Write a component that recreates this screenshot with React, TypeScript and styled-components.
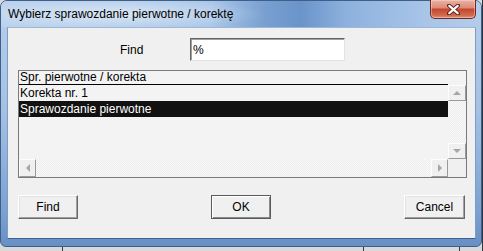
import React from "react";
import styled, { createGlobalStyle, css } from "styled-components";

const GlobalStyle = createGlobalStyle`
  html, body {
    margin: 0;
    padding: 0;
    overflow: hidden;
  }
  body {
    font-family: "Liberation Sans", Arial, sans-serif;
    font-size: 12px;
    color: #000;
  }
`;

// desktop behind the dialog (bits of other windows peek out at the bottom)
const Desktop = styled.div`
  width: 483px;
  height: 251px;
  background-color: #d9d9d9;
  background-image: linear-gradient(#3a3a3a, #3a3a3a), linear-gradient(#3a3a3a, #3a3a3a),
    linear-gradient(#3a3a3a, #3a3a3a), linear-gradient(#2e3440, #2e3440);
  background-size: 1px 100%, 1px 100%, 1px 100%, 1px 100%;
  background-position: 62px 0, 363px 0, 459px 0, 482px 0;
  background-repeat: no-repeat;
`;

const Window = styled.div`
  box-sizing: border-box;
  width: 482px;
  height: 247px;
  display: flex;
  flex-direction: column;
  border: 1px solid #3f5f88;
  border-radius: 7px 7px 6px 6px;
  background: linear-gradient(to bottom, #b6cfeb 0%, #a4c1e4 45%, #7ba2d2 85%, #6890c4 100%);
`;

const TitleBar = styled.div`
  height: 26px;
  display: flex;
  align-items: flex-start;
  border-radius: 6px 6px 0 0;
  background: radial-gradient(ellipse 150px 16px at 115px 13px, rgba(255, 255, 255, 0.5), rgba(255, 255, 255, 0)),
    linear-gradient(
      to right,
      #bcd3ed 0,
      #aac7e8 210px,
      #789fd0 265px,
      #6a94ca 300px,
      #8db1dd 345px,
      #a7c4e7 420px,
      #b3cceb 100%
    );
`;

const TitleText = styled.div`
  margin-left: 7px;
  line-height: 26px;
  font-size: 12px;
  color: #000;
  white-space: nowrap;
`;

const CloseButton = styled.div`
  box-sizing: border-box;
  margin: -1px 5px 0 auto;
  width: 46px;
  height: 19px;
  display: flex;
  align-items: center;
  justify-content: center;
  border: 1px solid #6b2b22;
  border-top: none;
  border-radius: 0 0 5px 5px;
  background: linear-gradient(to bottom, #eab2a4 0%, #dc8c78 42%, #c5472f 52%, #cf6a4e 85%, #e0937a 100%);
  box-shadow: inset 0 0 0 1px rgba(255, 220, 210, 0.45);
`;

const Frame = styled.div`
  flex: 1;
  display: flex;
  padding: 0 5px 7px 6px;
`;

const Client = styled.div`
  box-sizing: border-box;
  flex: 1;
  display: flex;
  flex-direction: column;
  padding: 10px 8px 0 10px;
  background: #f0f0f0;
  border: 1px solid #7f9dc4;
  border-top-color: #9fb6d4;
  border-bottom-color: #3f6090;
`;

const FindRow = styled.div`
  display: flex;
  align-items: center;
  height: 23px;
`;

const FieldLabel = styled.label`
  width: 70px;
  margin-left: 102px;
  font-size: 12px;
`;

const TextInput = styled.input`
  box-sizing: border-box;
  width: 155px;
  height: 23px;
  margin: 0;
  padding: 0 0 0 2px;
  font-family: "Liberation Sans", Arial, sans-serif;
  font-size: 12px;
  color: #000;
  background: #fff;
  border: 1px solid;
  border-color: #646464 #e3e3e3 #e3e3e3 #646464;
  box-shadow: inset 1px 1px 0 #a0a0a0;
  outline: none;
`;

const ListBox = styled.div`
  box-sizing: border-box;
  margin-top: 9px;
  width: 449px;
  height: 108px;
  display: grid;
  grid-template-columns: 429px 18px;
  grid-template-rows: 14px 74px 18px;
  border: 1px solid #7a7a7a;
  background: #f3f3f3;
`;

const ListHeader = styled.div`
  box-sizing: border-box;
  height: 14px;
  padding-left: 1px;
  line-height: 13px;
  overflow: hidden;
  border-bottom: 1px solid #000;
  white-space: nowrap;
`;

const HeaderSpacer = styled.div``;

const Rows = styled.div`
  overflow: hidden;
`;

const Row = styled.div<{ $selected?: boolean }>`
  height: 16px;
  line-height: 16px;
  padding-left: 1px;
  white-space: nowrap;
  ${(p) =>
    p.$selected &&
    css`
      background: #111;
      color: #fff;
    `}
`;

const ScrollBar = styled.div<{ $vertical?: boolean }>`
  display: flex;
  flex-direction: ${(p) => (p.$vertical ? "column" : "row")};
  background: repeating-conic-gradient(#fbfbfb 0 25%, #ebebeb 0 50%) 0 0 / 2px 2px;
`;

const ScrollButton = styled.div<{ $vertical?: boolean }>`
  box-sizing: border-box;
  flex: none;
  ${(p) => (p.$vertical ? "height: 16px;" : "width: 17px;")}
  display: flex;
  align-items: center;
  justify-content: center;
  background: #f0f0f0;
  border: 1px solid;
  border-color: #fdfdfd #9a9a9a #9a9a9a #fdfdfd;
`;

const Track = styled.div`
  flex: 1;
`;

const arrowShapes = {
  up: css`
    border-left: 4px solid transparent;
    border-right: 4px solid transparent;
    border-bottom: 4px solid #a6a6a6;
  `,
  down: css`
    border-left: 4px solid transparent;
    border-right: 4px solid transparent;
    border-top: 4px solid #a6a6a6;
  `,
  left: css`
    border-top: 4px solid transparent;
    border-bottom: 4px solid transparent;
    border-right: 4px solid #a6a6a6;
  `,
  right: css`
    border-top: 4px solid transparent;
    border-bottom: 4px solid transparent;
    border-left: 4px solid #a6a6a6;
  `,
};

const Arrow = styled.span<{ $dir: keyof typeof arrowShapes }>`
  width: 0;
  height: 0;
  ${(p) => arrowShapes[p.$dir]}
`;

const Corner = styled.div`
  background: #f0f0f0;
`;

const ButtonRow = styled.div`
  margin-top: 17px;
  padding-right: 2px;
  width: 447px;
  display: flex;
  justify-content: space-between;
`;

const PushButton = styled.button<{ $default?: boolean; $wide?: boolean }>`
  box-sizing: border-box;
  width: ${(p) => (p.$wide ? "61px" : "60px")};
  height: 24px;
  margin: 0;
  padding: 0;
  font-family: "Liberation Sans", Arial, sans-serif;
  font-size: 12px;
  color: #000;
  background: #f0f0f0;
  border: 1px solid;
  border-color: #ffffff #696969 #696969 #ffffff;
  box-shadow: inset -1px -1px 0 #a0a0a0, inset 1px 1px 0 #e3e3e3;
  ${(p) =>
    p.$default &&
    css`
      border-color: #5a5a5a;
      box-shadow: inset 1px 1px 0 #fff, inset -1px -1px 0 #8a8a8a;
    `}
`;

const CloseGlyph = () => (
  <svg width="13" height="11" viewBox="0 0 13 11">
    <path d="M2 1.5 L11 9.5 M11 1.5 L2 9.5" stroke="#5a1e16" strokeWidth="4" strokeLinecap="round" />
    <path d="M2.3 1.8 L10.7 9.2 M10.7 1.8 L2.3 9.2" stroke="#ffffff" strokeWidth="2.2" strokeLinecap="round" />
  </svg>
);

const rows = ["Korekta nr. 1", "Sprawozdanie pierwotne"];

const App = () => {
  return (
    <Desktop>
      <GlobalStyle />
      <Window>
        <TitleBar>
          <TitleText>Wybierz sprawozdanie pierwotne / korektę</TitleText>
          <CloseButton>
            <CloseGlyph />
          </CloseButton>
        </TitleBar>
        <Frame>
          <Client>
            <FindRow>
              <FieldLabel>Find</FieldLabel>
              <TextInput type="text" defaultValue="%" />
            </FindRow>
            <ListBox>
              <ListHeader>Spr. pierwotne / korekta</ListHeader>
              <HeaderSpacer />
              <Rows>
                {rows.map((r, i) => (
                  <Row key={r} $selected={i === 1}>
                    {r}
                  </Row>
                ))}
              </Rows>
              <ScrollBar $vertical>
                <ScrollButton $vertical>
                  <Arrow $dir="up" />
                </ScrollButton>
                <Track />
                <ScrollButton $vertical>
                  <Arrow $dir="down" />
                </ScrollButton>
              </ScrollBar>
              <ScrollBar>
                <ScrollButton>
                  <Arrow $dir="left" />
                </ScrollButton>
                <Track />
                <ScrollButton>
                  <Arrow $dir="right" />
                </ScrollButton>
              </ScrollBar>
              <Corner />
            </ListBox>
            <ButtonRow>
              <PushButton>Find</PushButton>
              <PushButton $default>OK</PushButton>
              <PushButton $wide>Cancel</PushButton>
            </ButtonRow>
          </Client>
        </Frame>
      </Window>
    </Desktop>
  );
};

export default App;
